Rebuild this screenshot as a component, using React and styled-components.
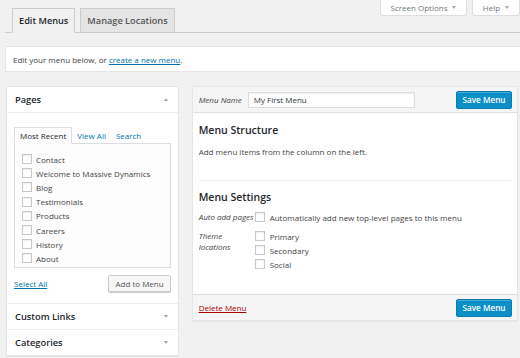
import React from "react";
import styled, { createGlobalStyle } from "styled-components";

const GlobalStyle = createGlobalStyle`
  body {
    margin: 0;
    background: #f1f1f1;
    font-family: "Open Sans", "Liberation Sans", sans-serif;
    font-size: 8px;
    color: #444;
  }
  * { box-sizing: border-box; }
`;

const Page = styled.div`
  width: 520px;
  height: 358px;
  overflow: hidden;
`;

const Header = styled.div`
  display: flex;
  margin-left: 5px;
  height: 33px;
  border-bottom: 1px solid #ccc;
`;

const TabList = styled.div`
  flex: 1;
  display: flex;
  align-items: flex-end;
  gap: 5px;
  padding-left: 7px;
  align-self: flex-end;
  margin-bottom: -1px;
`;

const NavTab = styled.div`
  height: 25px;
  display: flex;
  align-items: center;
  padding: 0 6px;
  border: 1px solid #ccc;
  border-bottom-color: ${(p) => (p.$active ? "#f1f1f1" : "#ccc")};
  background: ${(p) => (p.$active ? "#f1f1f1" : "#e4e4e4")};
  font-size: 9.2px;
  font-weight: 600;
  color: ${(p) => (p.$active ? "#23282d" : "#555")};
`;

const ScreenMeta = styled.div`
  display: flex;
  gap: 5px;
  align-self: flex-start;
`;

const MetaButton = styled.div`
  width: ${(p) => p.$w}px;
  height: 16px;
  display: flex;
  align-items: center;
  justify-content: center;
  gap: 5px;
  background: #fff;
  border: 1px solid #ddd;
  border-top: none;
  border-radius: 0 0 3px 3px;
  color: #72777c;
  font-size: 8px;
`;

const Caret = styled.span`
  width: 0;
  height: 0;
  border-left: 2.5px solid transparent;
  border-right: 2.5px solid transparent;
  ${(p) =>
    p.$up
      ? "border-bottom: 3px solid #aaa;"
      : "border-top: 3px solid #aaa;"}
`;

const Notice = styled.div`
  margin: 13px 0 0 5px;
  height: 26px;
  display: flex;
  align-items: center;
  padding-left: 7px;
  background: #fff;
  border: 1px solid #e5e5e5;
  border-right: none;
`;

const Link = styled.a`
  color: #0073aa;
  text-decoration: underline;
  cursor: pointer;
`;

const Main = styled.div`
  display: flex;
  gap: 13px;
  padding: 14px 2px 0 6px;
`;

const SideCol = styled.div`
  width: 173px;
  background: #fff;
  border: 1px solid #e5e5e5;
  box-shadow: 0 1px 1px rgba(0, 0, 0, 0.04);
`;

const SectionHead = styled.div`
  height: 26px;
  display: flex;
  align-items: center;
  justify-content: space-between;
  padding: 0 10px 0 8px;
  font-size: 9.3px;
  font-weight: 600;
  color: #23282d;
  border-top: ${(p) => (p.$first ? "none" : "1px solid #eee")};
  border-bottom: ${(p) => (p.$open ? "1px solid #eee" : "none")};
`;

const SectionBody = styled.div`
  padding: 14px 7px 11px 7px;
`;

const PageTabs = styled.div`
  display: flex;
  align-items: flex-end;
  margin-bottom: -1px;
`;

const PageTab = styled.div`
  height: 17px;
  display: flex;
  align-items: center;
  padding: 0 5px;
  ${(p) =>
    p.$active
      ? "border: 1px solid #ddd; border-bottom-color: #fdfdfd; background: #fdfdfd; color: #23282d;"
      : "color: #0073aa; padding: 0 5px 1px;"}
`;

const CheckList = styled.div`
  height: 125px;
  border: 1px solid #ddd;
  background: #fdfdfd;
  padding: 8px 0 0 7px;
`;

const CheckRow = styled.div`
  height: 14.2px;
  display: flex;
  align-items: center;
  gap: 4px;
  color: #444;
`;

const Box = styled.span`
  width: 10px;
  height: 10px;
  flex: none;
  background: #fff;
  border: 1px solid #c6c9cc;
  box-shadow: inset 0 1px 2px rgba(0, 0, 0, 0.07);
`;

const BoxActions = styled.div`
  display: flex;
  align-items: center;
  justify-content: space-between;
  margin-top: 7px;
`;

const SecondaryButton = styled.button`
  height: 17px;
  padding: 0 6px;
  font-family: inherit;
  font-size: 8px;
  color: #555;
  background: #f7f7f7;
  border: 1px solid #ccc;
  border-radius: 2px;
  box-shadow: 0 1px 0 #ccc;
`;

const MenuPanel = styled.div`
  width: 327px;
  height: 235px;
  display: flex;
  flex-direction: column;
  background: #fff;
  border: 1px solid #e5e5e5;
  box-shadow: 0 1px 1px rgba(0, 0, 0, 0.04);
`;

const PanelBar = styled.div`
  height: 26px;
  flex: none;
  display: flex;
  align-items: center;
  padding: 0 5px 0 6px;
  background: #f5f5f5;
  border-${(p) => (p.$top ? "bottom" : "top")}: 1px solid #dfdfdf;
`;

const LabelItalic = styled.span`
  font-style: italic;
  color: #444;
`;

const NameInput = styled.div`
  width: 167px;
  height: 16px;
  margin-left: 6px;
  display: flex;
  align-items: center;
  padding-left: 5px;
  background: #fff;
  border: 1px solid #ddd;
  box-shadow: inset 0 1px 2px rgba(0, 0, 0, 0.07);
  color: #32373c;
`;

const PrimaryButton = styled.button`
  margin-left: auto;
  width: 56px;
  height: 18px;
  font-family: inherit;
  font-size: 8.2px;
  font-weight: 600;
  color: #fff;
  background: #0c8ec6;
  border: 1px solid #0a7cb0;
  border-radius: 2px;
  box-shadow: inset 0 1px 0 rgba(120, 200, 230, 0.5);
  padding: 0;
`;

const PanelBody = styled.div`
  flex: 1;
  padding: 10px 6px 0 6px;
`;

const Heading = styled.h3`
  margin: ${(p) => p.$mt || 0}px 0 0;
  font-size: 10.5px;
  line-height: 14px;
  font-weight: 600;
  color: #23282d;
`;

const Para = styled.p`
  margin: 9px 0 0;
  line-height: 12px;
`;

const Divider = styled.hr`
  margin: 22px 0 0;
  border: none;
  border-top: 1px solid #eee;
`;

const SettingRow = styled.div`
  display: flex;
  align-items: flex-start;
  margin-top: ${(p) => p.$mt}px;
`;

const SettingLabel = styled.div`
  width: 56px;
  flex: none;
  font-style: italic;
  line-height: ${(p) => (p.$single ? "14px" : "11px")};
  white-space: ${(p) => (p.$single ? "nowrap" : "normal")};
  padding-top: ${(p) => (p.$single ? 0 : 1)}px;
`;

const OptionList = styled.div`
  display: flex;
  flex-direction: column;
`;

const Option = styled.div`
  height: 14px;
  display: flex;
  align-items: center;
  gap: 5px;
  white-space: nowrap;
`;

const DeleteLink = styled.a`
  color: #a00;
  text-decoration: underline;
`;

const pages = [
  "Contact",
  "Welcome to Massive Dynamics",
  "Blog",
  "Testimonials",
  "Products",
  "Careers",
  "History",
  "About",
];

export default function App() {
  return (
    <Page>
      <GlobalStyle />
      <Header>
        <TabList>
          <NavTab $active>Edit Menus</NavTab>
          <NavTab>Manage Locations</NavTab>
        </TabList>
        <ScreenMeta>
          <MetaButton $w={87}>
            Screen Options <Caret />
          </MetaButton>
          <MetaButton $w={48}>
            Help <Caret />
          </MetaButton>
        </ScreenMeta>
      </Header>

      <Notice>
        Edit your menu below, or&nbsp;<Link>create a new menu</Link>.
      </Notice>

      <Main>
        <SideCol>
          <SectionHead $first $open>
            Pages <Caret $up />
          </SectionHead>
          <SectionBody>
            <PageTabs>
              <PageTab $active>Most Recent</PageTab>
              <PageTab>View All</PageTab>
              <PageTab>Search</PageTab>
            </PageTabs>
            <CheckList>
              {pages.map((p) => (
                <CheckRow key={p}>
                  <Box />
                  {p}
                </CheckRow>
              ))}
            </CheckList>
            <BoxActions>
              <Link>Select All</Link>
              <SecondaryButton>Add to Menu</SecondaryButton>
            </BoxActions>
          </SectionBody>
          <SectionHead>
            Custom Links <Caret />
          </SectionHead>
          <SectionHead>
            Categories <Caret />
          </SectionHead>
        </SideCol>

        <MenuPanel>
          <PanelBar $top>
            <LabelItalic>Menu Name</LabelItalic>
            <NameInput>My First Menu</NameInput>
            <PrimaryButton>Save Menu</PrimaryButton>
          </PanelBar>
          <PanelBody>
            <Heading>Menu Structure</Heading>
            <Para>Add menu items from the column on the left.</Para>
            <Divider />
            <Heading $mt={9}>Menu Settings</Heading>
            <SettingRow $mt={6}>
              <SettingLabel $single>Auto add pages</SettingLabel>
              <Option>
                <Box />
                Automatically add new top-level pages to this menu
              </Option>
            </SettingRow>
            <SettingRow $mt={5}>
              <SettingLabel>
                Theme
                <br />
                locations
              </SettingLabel>
              <OptionList>
                <Option>
                  <Box />
                  Primary
                </Option>
                <Option>
                  <Box />
                  Secondary
                </Option>
                <Option>
                  <Box />
                  Social
                </Option>
              </OptionList>
            </SettingRow>
          </PanelBody>
          <PanelBar>
            <DeleteLink>Delete Menu</DeleteLink>
            <PrimaryButton>Save Menu</PrimaryButton>
          </PanelBar>
        </MenuPanel>
      </Main>
    </Page>
  );
}
